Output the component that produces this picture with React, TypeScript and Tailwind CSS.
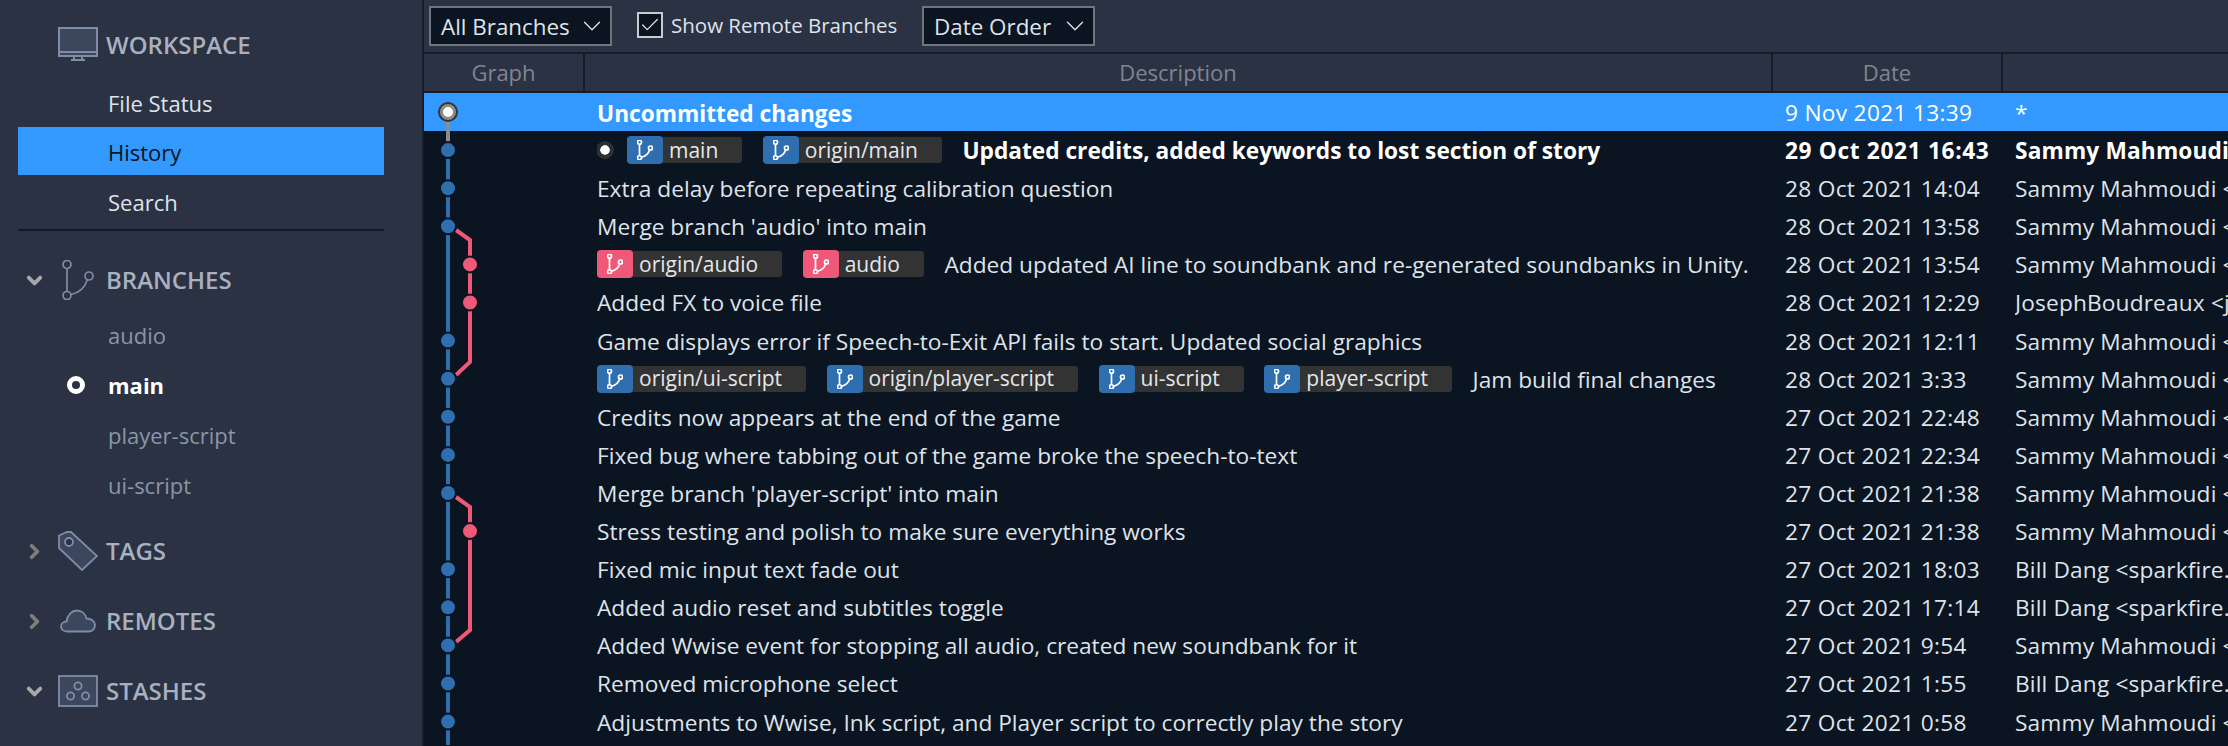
import type { ReactNode } from "react"
import { ChevronDown, ChevronRight, Check } from "lucide-react"

type Ref = { name: string; color: "blue" | "pink" }
type Commit = { msg: string; date: string; author: string; refs?: Ref[]; bold?: boolean; selected?: boolean; head?: boolean }

const SAMMY = "Sammy Mahmoudi <sammy.mahmoudi@gmail.com>"
const BILL = "Bill Dang <sparkfire.dev@gmail.com>"

const commits: Commit[] = [
  { msg: "Uncommitted changes", date: "9 Nov 2021 13:39", author: "*", selected: true },
  {
    msg: "Updated credits, added keywords to lost section of story",
    date: "29 Oct 2021 16:43",
    author: SAMMY,
    bold: true,
    head: true,
    refs: [
      { name: "main", color: "blue" },
      { name: "origin/main", color: "blue" },
    ],
  },
  { msg: "Extra delay before repeating calibration question", date: "28 Oct 2021 14:04", author: SAMMY },
  { msg: "Merge branch 'audio' into main", date: "28 Oct 2021 13:58", author: SAMMY },
  {
    msg: "Added updated AI line to soundbank and re-generated soundbanks in Unity.",
    date: "28 Oct 2021 13:54",
    author: SAMMY,
    refs: [
      { name: "origin/audio", color: "pink" },
      { name: "audio", color: "pink" },
    ],
  },
  { msg: "Added FX to voice file", date: "28 Oct 2021 12:29", author: "JosephBoudreaux <joseph@example.com>" },
  { msg: "Game displays error if Speech-to-Exit API fails to start. Updated social graphics", date: "28 Oct 2021 12:11", author: SAMMY },
  {
    msg: "Jam build final changes",
    date: "28 Oct 2021 3:33",
    author: SAMMY,
    refs: [
      { name: "origin/ui-script", color: "blue" },
      { name: "origin/player-script", color: "blue" },
      { name: "ui-script", color: "blue" },
      { name: "player-script", color: "blue" },
    ],
  },
  { msg: "Credits now appears at the end of the game", date: "27 Oct 2021 22:48", author: SAMMY },
  { msg: "Fixed bug where tabbing out of the game broke the speech-to-text", date: "27 Oct 2021 22:34", author: SAMMY },
  { msg: "Merge branch 'player-script' into main", date: "27 Oct 2021 21:38", author: SAMMY },
  { msg: "Stress testing and polish to make sure everything works", date: "27 Oct 2021 21:38", author: SAMMY },
  { msg: "Fixed mic input text fade out", date: "27 Oct 2021 18:03", author: BILL },
  { msg: "Added audio reset and subtitles toggle", date: "27 Oct 2021 17:14", author: BILL },
  { msg: "Added Wwise event for stopping all audio, created new soundbank for it", date: "27 Oct 2021 9:54", author: SAMMY },
  { msg: "Removed microphone select", date: "27 Oct 2021 1:55", author: BILL },
  { msg: "Adjustments to Wwise, Ink script, and Player script to correctly play the story", date: "27 Oct 2021 0:58", author: SAMMY },
]

function BranchGlyph({ className, strokeWidth }: { className?: string; strokeWidth: number }) {
  return (
    <svg viewBox="0 0 32 40" className={className} fill="none" stroke="currentColor" strokeWidth={strokeWidth}>
      <circle cx="5" cy="4.5" r="4" />
      <circle cx="5" cy="35.5" r="4" />
      <circle cx="27" cy="16" r="4" />
      <path d="M5 8.5v23M9 34.5C17 33 23 27 25.5 19.5" />
    </svg>
  )
}

function SectionHead({ label, icon, chevron }: { label: string; icon: ReactNode; chevron: "down" | "right" }) {
  return (
    <div className="flex items-center h-[50px] pl-[23px]">
      <div className="w-[35px] flex items-center">
        {chevron === "down" ? (
          <ChevronDown size={23} strokeWidth={4} className="text-[#a8a8a8]" />
        ) : (
          <ChevronRight size={23} strokeWidth={4} className="text-[#7d7d7d]" />
        )}
      </div>
      <div className="w-[48px] flex justify-start">{icon}</div>
      <span className="text-[24px] font-semibold text-[#a9b0bf]">{label}</span>
    </div>
  )
}

function Sidebar() {
  return (
    <aside className="w-[422px] shrink-0 bg-[#2a3244] pt-[20px]">
      <div className="flex items-center h-[50px] pl-[58px]">
        <svg viewBox="0 0 40 36" className="w-[40px] h-[36px] mr-[8px]" fill="none" stroke="#7e8ca8" strokeWidth="2">
          <rect x="1" y="1" width="38" height="28" fill="#3c465c" />
          <path d="M1 25h38M13 33h14M16 30v3M24 30v3" />
        </svg>
        <span className="text-[24px] font-semibold text-[#a9b0bf]">WORKSPACE</span>
      </div>
      <div className="ml-[18px] w-[366px] mt-[7px] text-[22px]">
        <div className="h-[50px] flex items-center pl-[90px] pt-[2px] text-[#dfe3ea]">File Status</div>
        <div className="h-[48px] flex items-center pl-[90px] pt-[3px] text-[#0b1421] bg-[#3399ff]">History</div>
        <div className="h-[53px] flex items-center pl-[90px] pt-[2px] text-[#dfe3ea]">Search</div>
        <div className="h-[2px] mt-[1px] bg-[#141a26]" />
      </div>
      <div className="mt-[24px]">
        <SectionHead label="BRANCHES" chevron="down" icon={<BranchGlyph strokeWidth={1.7} className="ml-[4px] w-[32px] h-[40px] text-[#7e8ca8]" />} />
      </div>
      <div className="text-[22px] mt-[5px]">
        <div className="h-[50px] flex items-center pl-[108px] text-[#8c95a6]">audio</div>
        <div className="h-[50px] flex items-center pl-[67px] text-white font-bold">
          <span className="w-[18px] h-[18px] rounded-full border-[5px] border-white mr-[23px]" />
          main
        </div>
        <div className="h-[50px] flex items-center pl-[108px] text-[#8c95a6]">player-script</div>
        <div className="h-[50px] flex items-center pl-[108px] text-[#8c95a6]">ui-script</div>
      </div>
      <div className="mt-[16px]">
        <SectionHead
          label="TAGS"
          chevron="right"
          icon={
            <svg viewBox="0 0 40 40" className="w-[40px] h-[40px]" fill="#3c465c" stroke="#7e8ca8" strokeWidth="1.8">
              <path d="M1 4.500 9 1h4l26 24-15 14L1 17z" />
              <circle cx="11" cy="11" r="4" fill="#2a3244" />
            </svg>
          }
        />
      </div>
      <div className="mt-[20px]">
        <SectionHead
          label="REMOTES"
          chevron="right"
          icon={
            <svg viewBox="0 0 36 24" className="ml-[2px] w-[36px] h-[24px]" fill="#3c465c" stroke="#7e8ca8" strokeWidth="1.8">
              <path d="M7 22.500C3 22.500 1 20 1 17.500 1 14.500 3.500 12.500 6.500 12.500 7.500 5.500 12 1.500 17 1.500c5 0 8.500 3.500 9.500 8 5 0 8.500 3 8.500 6.500 0 3.500-2.500 6.500-6.500 6.500z" />
            </svg>
          }
        />
      </div>
      <div className="mt-[20px]">
        <SectionHead
          label="STASHES"
          chevron="down"
          icon={
            <svg viewBox="0 0 40 32" className="w-[40px] h-[32px]" fill="none" stroke="#7e8ca8" strokeWidth="1.8">
              <rect x="1" y="1" width="38" height="30" fill="#3c465c" />
              <circle cx="20" cy="11" r="3.600" />
              <circle cx="12.500" cy="21" r="3.600" />
              <circle cx="27.500" cy="21" r="3.600" />
            </svg>
          }
        />
      </div>
    </aside>
  )
}

function Select({ label, className }: { label: string; className: string }) {
  return (
    <div className={`h-[40px] bg-[#0b1421] border-2 border-[#70747c] flex items-center justify-between pl-[10px] pr-[3px] text-[22.4px] text-[#dfe3ea] ${className}`}>
      <span className="pt-[3px]">{label}</span>
      <ChevronDown size={30} strokeWidth={1.1} className="text-[#dfe3ea]" />
    </div>
  )
}

function Toolbar() {
  return (
    <div className="h-[52px] shrink-0 flex items-center pl-[5px] bg-[#2a3244] pb-[1px]">
      <Select label="All Branches" className="w-[183px]" />
      <div className="ml-[25px] w-[26px] h-[26px] bg-[#0b1421] border-2 border-[#c8ccd2] flex items-center justify-center -mt-[2px]">
        <Check size={24} strokeWidth={1.3} className="text-[#e4e7ec]" />
      </div>
      <span className="ml-[8px] text-[20.5px] text-[#dfe3ea] w-[251px]">Show Remote Branches</span>
      <Select label="Date Order" className="w-[173px]" />
    </div>
  )
}

function ColumnHeader() {
  return (
    <div className="h-[41px] shrink-0 flex bg-[#2a3244] border-y-2 border-[#161c29] text-[22px] text-[#808590] box-border">
      <div className="w-[161px] flex items-center justify-center border-r-2 border-[#161c29]">Graph</div>
      <div className="w-[1188px] flex items-center justify-center border-r-2 border-[#161c29]">Description</div>
      <div className="w-[230px] flex items-center justify-center border-r-2 border-[#161c29]">Date</div>
      <div className="flex-1" />
    </div>
  )
}

function RefBadge({ item }: { item: Ref }) {
  return (
    <span className="h-[26px] flex items-center rounded-[3px] bg-[#333333] pr-[24px] mr-[20.5px] shrink-0">
      <span className={`w-[36px] h-[28px] rounded-[4px] flex items-center justify-center ${item.color === "blue" ? "bg-[#2f6fb0]" : "bg-[#f0587a]"}`}>
        <BranchGlyph strokeWidth={3.4} className="w-[16px] h-[20px] text-white" />
      </span>
      <span className="ml-[6px] pt-[1px] text-[21px] text-[#e4e7ec] font-normal">{item.name}</span>
    </span>
  )
}

function CommitRow({ commit }: { commit: Commit }) {
  const rowTone = commit.selected ? "bg-[#3399ff] text-white" : commit.bold ? "text-white" : "text-[#dfe3ea]"
  const weight = commit.bold ? "font-bold" : ""
  return (
    <div className={`h-[38.1px] flex items-center text-[22.7px] whitespace-nowrap ${rowTone}`}>
      <div className="w-[173px] shrink-0" />
      <div className={`w-[1188px] shrink-0 flex items-center overflow-hidden ${commit.selected ? "font-bold" : weight}`}>
        {commit.head && <span className="w-[10px] h-[10px] rounded-full bg-white ml-[3px] mr-[17px] outline-[4px] outline-[#2e3034] shrink-0" />}
        {commit.refs?.map((r) => <RefBadge key={r.name} item={r} />)}
        <span className={commit.selected ? "pt-[3px]" : "pt-[2px]"}>{commit.msg}</span>
      </div>
      <div className={`w-[230px] shrink-0 pt-[2px] ${commit.bold ? "font-bold tracking-[0.65px]" : "tracking-[0.3px]"}`}>{commit.date}</div>
      <div className={`flex-1 overflow-hidden pt-[2px] tracking-[0.15px] ${weight}`}>{commit.author}</div>
    </div>
  )
}

// commit graph painted above the row list; y values are relative to the list top
function Graph() {
  const y = (i: number) => 19 + i * 38.1
  const main = [1, 2, 3, 6, 7, 8, 9, 10, 12, 13, 14, 15, 16]
  const side = [4, 5, 11]
  return (
    <svg className="absolute left-0 top-0 pointer-events-none" width="80" height="652" fill="none">
      <path d={`M24 ${y(0)}V${y(1)}`} stroke="#8c8c8c" strokeWidth="4" />
      <path d={`M24 ${y(1)}V652`} stroke="#2f6fb0" strokeWidth="4" />
      <path d="M32 137L46 147V269L32 282" stroke="#f0587a" strokeWidth="4" />
      <path d="M32 404L46 414V537L32 549" stroke="#f0587a" strokeWidth="4" />
      <circle cx="24" cy={y(0)} r="10" fill="#333333" />
      <circle cx="24" cy={y(0)} r="8" fill="#8c8c8c" />
      <circle cx="24" cy={y(0)} r="5" fill="white" />
      {main.map((i) => (
        <circle key={i} cx="24" cy={y(i)} r="8" fill="#2f6fb0" stroke="#0b1421" strokeWidth="2" />
      ))}
      {side.map((i) => (
        <circle key={i} cx="46" cy={y(i)} r="8" fill="#f0587a" stroke="#0b1421" strokeWidth="2" />
      ))}
    </svg>
  )
}

export default function App() {
  return (
    <div className="w-[2228px] h-[746px] flex overflow-hidden bg-[#0b1421] font-['Open_Sans','Noto_Sans',sans-serif]">
      <Sidebar />
      <div className="w-[2px] bg-[#161c29] shrink-0" />
      <main className="flex-1 min-w-0 flex flex-col">
        <Toolbar />
        <ColumnHeader />
        <div className="relative flex-1 overflow-hidden">
          {commits.map((c) => (
            <CommitRow key={c.msg} commit={c} />
          ))}
          <Graph />
        </div>
      </main>
    </div>
  )
}
